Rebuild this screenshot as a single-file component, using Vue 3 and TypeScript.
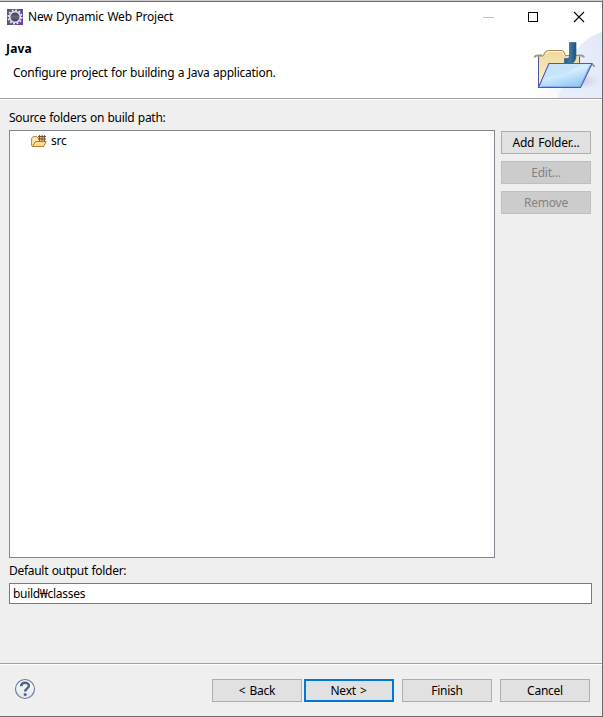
<script setup lang="ts">
import { ref } from 'vue'

interface ActionButton {
  label: string
  kind?: 'primary' | 'disabled'
  cls: string
}

const folders = ref<string[]>(['src'])
const output = ref('build₩classes')
const sideActions: ActionButton[] = [
  { label: 'Add Folder...', cls: 'add' },
  { label: 'Edit...', kind: 'disabled', cls: 'edit' },
  { label: 'Remove', kind: 'disabled', cls: 'remove' },
]
const footerActions: ActionButton[] = [
  { label: '< Back', cls: 'back' },
  { label: 'Next >', kind: 'primary', cls: 'next' },
  { label: 'Finish', cls: 'finish' },
  { label: 'Cancel', cls: 'cancel' },
]
</script>

<template>
  <div class="window">
    <header class="banner">
      <div class="titlebar">
        <svg class="app-icon" width="16" height="16" viewBox="0 0 16 16">
          <defs>
            <linearGradient id="app-bg" x1="0" y1="0" x2="1" y2="1">
              <stop offset="0" stop-color="#5b5578" /><stop offset="1" stop-color="#62479a" />
            </linearGradient>
            <linearGradient id="app-core" x1="0" y1="0" x2="0" y2="1">
              <stop offset="0" stop-color="#35304b" /><stop offset="0.5" stop-color="#6b6684" /><stop offset="1" stop-color="#35304b" />
            </linearGradient>
          </defs>
          <rect width="16" height="16" fill="url(#app-bg)" />
          <circle cx="8" cy="8" r="6.7" fill="none" stroke="#ededf1" stroke-width="1.7" stroke-dasharray="1.85 1.658" />
          <circle cx="8" cy="8" r="5.3" fill="url(#app-core)" stroke="#e9e9ee" stroke-width="1.5" />
        </svg>
        <h1 class="title">New Dynamic Web Project</h1>
        <svg class="controls" width="103" height="12" viewBox="0 0 103 12">
          <path d="M0 6.5h11" stroke="#c4c4c4" />
          <rect x="45.5" y="1.5" width="9" height="9" fill="none" stroke="#000" />
          <path d="M91 1l10 10M101 1L91 11" stroke="#000" stroke-width="1.1" />
        </svg>
      </div>
      <h2 class="heading">Java</h2>
      <p class="description">Configure project for building a Java application.</p>
      <svg class="art" width="75" height="66" viewBox="527 32 75 66">
        <defs>
          <linearGradient id="swoosh" x1="0" y1="1" x2="1" y2="0">
            <stop offset="0" stop-color="#fff" /><stop offset="0.45" stop-color="#edf1fb" /><stop offset="1" stop-color="#dfe7f7" />
          </linearGradient>
          <linearGradient id="back-panel" x1="0" y1="0" x2="0" y2="1">
            <stop offset="0" stop-color="#efd9a2" /><stop offset="1" stop-color="#fff0c5" />
          </linearGradient>
          <linearGradient id="front-panel" x1="0" y1="0" x2="0.6" y2="1">
            <stop offset="0" stop-color="#cee8fb" /><stop offset="0.5" stop-color="#d5edfd" /><stop offset="1" stop-color="#8fc8f5" />
          </linearGradient>
          <linearGradient id="jay" x1="0" y1="0" x2="1" y2="0">
            <stop offset="0" stop-color="#23618e" /><stop offset="0.5" stop-color="#39779f" /><stop offset="1" stop-color="#1c527e" />
          </linearGradient>
          <radialGradient id="shade">
            <stop offset="0" stop-color="#b8afc7" stop-opacity="0.7" /><stop offset="1" stop-color="#d9d5e7" stop-opacity="0" />
          </radialGradient>
        </defs>
        <path d="M602 32C586 37 574 49 569 65C562 82 548 93 532 98H602Z" fill="url(#swoosh)" />
        <path d="M602 54C585 57 569 69 557 98H602Z" fill="#e3eafa" opacity="0.7" />
        <ellipse cx="581" cy="81" rx="20" ry="9" fill="url(#shade)" />
        <path d="M534.5 57.5Q535 55.5 537.5 55.5H542M578 55.5H581Q583.5 55.5 584 57.5M589 64.5H592Q594 65 594.5 67M544.5 67Q545 64.5 547 64.5" fill="none" stroke="#999" stroke-width="1.8" />
        <path d="M538.5 87V56H543Q545 50.5 548 50.5H562Q564 50.5 565.5 55.5H579.5V64L572 87Z" fill="url(#back-panel)" stroke="#a98b53" />
        <path d="M546 54Q547 51.5 549 51.5H561.5Q563 52 564 55" fill="none" stroke="#fff8df" />
        <path d="M538.5 87V57M579.5 57V66" stroke="#4d54a7" />
        <path d="M569.5 42.5H576V56Q576 63.5 569 63.5H564.5V58.5H567.5Q569.5 58.5 569.5 56Z" fill="url(#jay)" stroke="#28618b" stroke-width="0.7" />
        <path d="M549 63.5H592L580.5 87.5H538.5Z" fill="url(#front-panel)" stroke="#465eb9" stroke-width="1.2" />
        <path d="M549.5 64.5H585C574 66 571 74 558 75Q549 76 542 81Z" fill="#c0e0fa" opacity="0.75" />
        <path d="M541 86.5H580L590 65" fill="none" stroke="#7dabe6" stroke-width="0.8" />
      </svg>
    </header>

    <main class="content">
      <label class="caption source-caption"><span>Source folders on build path:</span></label>
      <div class="source-row">
        <ul class="folder-list">
          <li v-for="folder in folders" :key="folder" class="folder">
            <svg width="16" height="14" viewBox="0 0 16 14">
              <path d="M.6 11.5V4.4L2 2.6h3.6L7 4.2h6V11L12 12.5H1.5Z" fill="#fbeab8" stroke="#b8813c" />
              <rect x="8" y="2" width="5.5" height="4.5" fill="#e2bb84" />
              <path d="M8.5 1v6M11 .7v6.3M13.5 1v6M7 2.5h8M7 5h8" stroke="#7b4526" stroke-width="0.9" />
              <path d="M4.6 7.5h10.6l-2.6 5H1.2Z" fill="#ffdc92" stroke="#b77727" />
            </svg>
            <span class="folder-name">{{ folder }}</span>
          </li>
        </ul>
        <div class="side-actions">
          <button v-for="a in sideActions" :key="a.label" class="button" :class="[a.kind, a.cls]" :disabled="a.kind === 'disabled'">{{ a.label }}</button>
        </div>
      </div>
      <label class="caption output-caption" for="output"><span>Default output folder:</span></label>
      <input id="output" v-model="output" class="output" spellcheck="false" />
    </main>

    <footer class="footer">
      <svg class="help" width="22" height="22" viewBox="0 0 22 22">
        <defs>
          <linearGradient id="help-bg" x1="0" y1="0" x2="0" y2="1"><stop offset="0" stop-color="#fff" /><stop offset="1" stop-color="#e3e5e8" /></linearGradient>
        </defs>
        <circle cx="11" cy="11" r="9.5" fill="url(#help-bg)" stroke="#667a99" stroke-width="1.1" />
        <path d="M7.2 8.2C7.2 3.6 14.9 3.8 14.9 7.7C14.9 10.4 11.2 10.4 11.2 13.6" fill="none" stroke="#4f6486" stroke-width="2.5" />
        <circle cx="11.2" cy="16.4" r="1.5" fill="#4f6486" />
      </svg>
      <div class="footer-actions">
        <button v-for="a in footerActions" :key="a.label" class="button" :class="[a.kind, a.cls]">{{ a.label }}</button>
      </div>
    </footer>
  </div>
</template>

<style>
body { margin: 0; }
</style>

<style scoped>
.window {
  box-sizing: border-box;
  width: 603px;
  height: 717px;
  padding-top: 1px;
  display: flex;
  flex-direction: column;
  position: relative;
  background: #efefef;
  border-top: 1px solid #d0d0d0;
  border-right: 1px solid #6b6b6b;
  border-bottom: 1px solid #6b6b6b;
  color: #000;
  font: 12px/16px "Noto Sans", "Noto Sans CJK KR", sans-serif;
  letter-spacing: -0.25px;
  word-spacing: 0.6px;
  overflow: hidden;
}
.window::before {
  content: "";
  position: absolute;
  inset: 0 0 auto;
  height: 1px;
  background: #6b6b6b;
}
.window::after {
  content: "";
  position: absolute;
  top: 323px;
  right: -1px;
  width: 1px;
  height: 9px;
  background: #541c46;
}
.banner {
  box-sizing: border-box;
  height: 98px;
  flex: none;
  position: relative;
  background: #fff;
  border-bottom: 1px solid #fff;
  box-shadow: inset 0 -1px #a0a0a0;
}
.titlebar {
  display: flex;
  align-items: center;
  height: 30px;
  padding-left: 7px;
}
.title {
  margin: 0 0 0 5px;
  font-size: 12px;
  font-weight: 400;
  letter-spacing: -0.22px;
  word-spacing: 0.8px;
}
.controls { margin: 0 16px 0 auto; }
.heading {
  margin: 9px 0 0 6px;
  font-size: 12px;
  line-height: 16px;
  font-weight: 700;
  letter-spacing: 0.2px;
}
.description { margin: 8px 0 0 13px; }
.art { position: absolute; right: 0; top: 30px; }
.content {
  flex: 1;
  padding: 10px 10px 0 9px;
}
.caption { display: block; height: 16px; letter-spacing: -0.29px; }
.source-row {
  display: flex;
  gap: 6px;
  margin-top: 4px;
}
.folder-list {
  box-sizing: border-box;
  width: 486px;
  height: 428px;
  margin: 0;
  padding: 2px 0 0 21px;
  list-style: none;
  background: #fff;
  border: 1px solid #828790;
}
.folder { display: flex; gap: 4px; align-items: center; height: 16px; }
.side-actions {
  display: flex;
  flex-direction: column;
  gap: 7px;
  padding-top: 1px;
}
.button {
  box-sizing: border-box;
  width: 90px;
  height: 23px;
  padding: 0;
  border: 1px solid #adadad;
  border-radius: 0;
  background: #e1e1e1;
  color: #000;
  font: inherit;
  letter-spacing: -0.25px;
  word-spacing: 1.2px;
  line-height: 19px;
  white-space: nowrap;
}
.button.primary { border: 2px solid #0078d7; padding-right: 1px; line-height: 17px; }
.button.disabled { background: #ccc; border-color: #bfbfbf; color: #838383; }
.output-caption { margin-top: 5px; }
.output {
  box-sizing: border-box;
  display: block;
  width: 583px;
  height: 21px;
  margin: 4px 0 0;
  padding: 0 3px;
  border: 1px solid #7a7a7a;
  border-radius: 0;
  outline: 0;
  background: #fff;
  color: #000;
  font: inherit;
  letter-spacing: -0.3px;
}
.footer {
  box-sizing: border-box;
  height: 53px;
  flex: none;
  display: flex;
  justify-content: space-between;
  align-items: flex-start;
  padding: 14px 12px 0 14px;
  border-top: 1px solid #a0a0a0;
  box-shadow: inset 0 1px #fff;
}
.footer-actions { display: flex; padding-top: 1px; }
.next { margin-left: 2px; }
.finish, .cancel { margin-left: 8px; }
</style>
